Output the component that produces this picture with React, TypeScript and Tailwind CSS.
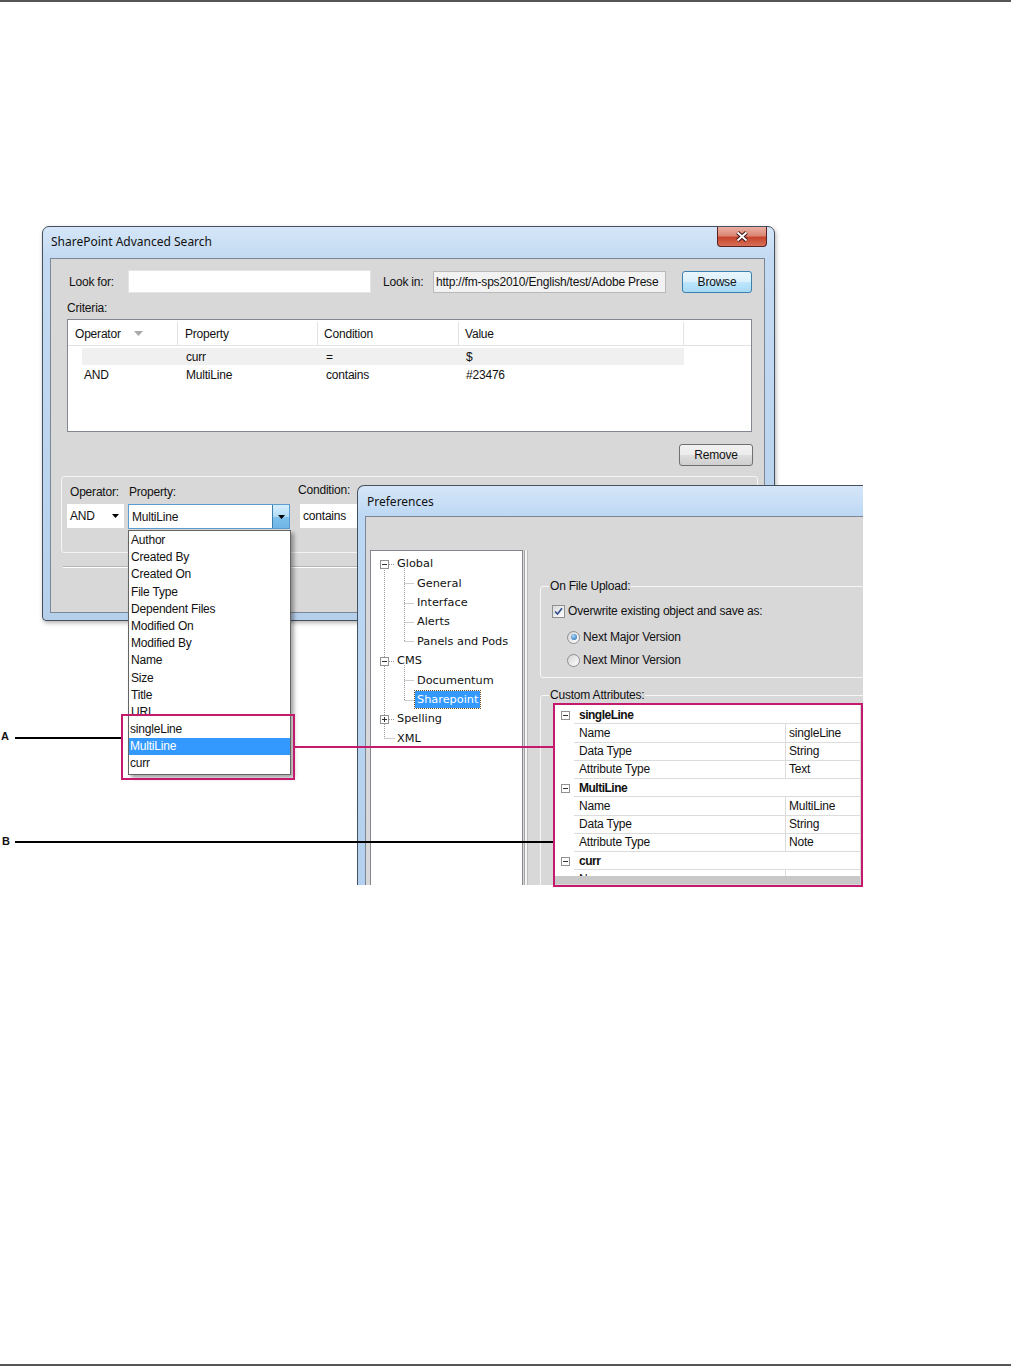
import React from "react";

const treeItems = [
  { label: "Global", level: 0 },
  { label: "General", level: 1 },
  { label: "Interface", level: 1 },
  { label: "Alerts", level: 1 },
  { label: "Panels and Pods", level: 1 },
  { label: "CMS", level: 0 },
  { label: "Documentum", level: 1 },
  { label: "Sharepoint", level: 1, selected: true },
  { label: "Spelling", level: 0 },
  { label: "XML", level: 0 },
];

const propertyItems = [
  "Author",
  "Created By",
  "Created On",
  "File Type",
  "Dependent Files",
  "Modified On",
  "Modified By",
  "Name",
  "Size",
  "Title",
  "URL",
];

type GridRow = { cat?: string; name?: string; value?: string };

const gridRows: GridRow[] = [
  { cat: "singleLine" },
  { name: "Name", value: "singleLine" },
  { name: "Data Type", value: "String" },
  { name: "Attribute Type", value: "Text" },
  { cat: "MultiLine" },
  { name: "Name", value: "MultiLine" },
  { name: "Data Type", value: "String" },
  { name: "Attribute Type", value: "Note" },
  { cat: "curr" },
  { name: "Name", value: "" },
];

const Caret = ({ color = "#000" }: { color?: string }) => (
  <svg width="7" height="4" viewBox="0 0 7 4">
    <path d="M0 0h7L3.5 4z" fill={color} />
  </svg>
);

const CloseButton = () => (
  <div className="absolute right-[-2px] top-0 flex h-[20px] w-[50px] items-center justify-center rounded-b-[4px] border border-t-0 border-[#5c2121] bg-[linear-gradient(180deg,#eab0a3_0%,#dc8775_45%,#c6452c_55%,#d66f58_100%)]">
    <svg width="14" height="11" viewBox="0 0 14 11">
      <path d="M2.5 1.5L11.5 9.5M11.5 1.5L2.5 9.5" stroke="#3a1010" strokeWidth="4" />
      <path d="M2.5 1.5L11.5 9.5M11.5 1.5L2.5 9.5" stroke="#ffffff" strokeWidth="2" />
    </svg>
  </div>
);

const Checkbox = () => (
  <span className="flex h-[13px] w-[13px] shrink-0 items-center justify-center border border-[#8e8f8f] bg-[linear-gradient(135deg,#d9d9d9,#ffffff)]">
    <svg width="9" height="9" viewBox="0 0 9 9">
      <path d="M1 4.5L3.5 7L8 1.2" stroke="#34508f" strokeWidth="1.7" fill="none" />
    </svg>
  </span>
);

const Radio = ({ checked }: { checked?: boolean }) => (
  <span className="flex h-[13px] w-[13px] shrink-0 items-center justify-center rounded-full border border-[#8e8f8f] bg-[linear-gradient(135deg,#d4d4d4,#ffffff)]">
    {checked && (
      <span className="h-[6px] w-[6px] rounded-full bg-[radial-gradient(circle_at_40%_35%,#a8dcff,#1d5ea6)]" />
    )}
  </span>
);

const ExpandBox = ({ plus }: { plus?: boolean }) => (
  <svg width="9" height="9" viewBox="0 0 9 9">
    <rect x="0.5" y="0.5" width="8" height="8" fill="#fff" stroke="#919191" />
    <path d="M2 4.5h5" stroke="#333" />
    {plus && <path d="M4.5 2v5" stroke="#333" />}
  </svg>
);

function SearchDialog() {
  return (
    <div className="absolute left-[42px] top-[226px] flex h-[395px] w-[733px] flex-col rounded-t-[7px] rounded-b-[4px] border border-[#45505e] bg-[linear-gradient(180deg,#d5e6f8_0px,#c3daf2_30px,#b6d0ec_100%)] pb-[7px] pl-[7px] pr-[9px] shadow-[1px_2px_4px_rgba(0,0,0,0.3)]">
      <div className="relative flex h-[31px] shrink-0 items-start pt-[7px]">
        <span className="pl-[1px] font-['Noto_Sans',sans-serif] text-[12px] leading-[16px] tracking-normal">
          SharePoint Advanced Search
        </span>
        <CloseButton />
      </div>

      <div className="flex flex-1 flex-col border border-[#7b8795] bg-[#d8d8d8]">
        <div className="mt-[11px] flex items-center pl-[18px]">
          <span className="w-[59px]">Look for:</span>
          <div className="h-[23px] w-[243px] border border-[#e4e4e4] bg-white" />
          <span className="ml-[12px] w-[50px]">Look in:</span>
          <div className="h-[22px] w-[233px] overflow-hidden whitespace-nowrap border border-[#b9b9b9] bg-[#f2f2f2] pl-[2px] leading-[20px]">
            http://fm-sps2010/English/test/Adobe Prese
          </div>
          <div className="ml-[16px] flex h-[22px] w-[70px] items-center justify-center rounded-[3px] border border-[#3c7fb1] bg-[linear-gradient(180deg,#eaf6fd_0%,#d9f0fc_50%,#bee6fd_51%,#a7d9f5_100%)]">
            Browse
          </div>
        </div>

        <div className="mt-[8px] h-[14px] pl-[16px] leading-[14px]">Criteria:</div>

        <div className="ml-[16px] mt-[4px] h-[113px] w-[685px] border border-[#828790] bg-white">
          <div className="flex h-[26px] border-b border-[#e3e3e3] pt-[2px]">
            <div className="flex w-[110px] items-center border-r border-[#e3e3e3] pl-[7px]">
              Operator
              <span className="ml-[13px]">
                <svg width="9" height="5" viewBox="0 0 9 5">
                  <path d="M0 0h9L4.5 5z" fill="#a9a9a9" />
                </svg>
              </span>
            </div>
            <div className="flex w-[140px] items-center border-r border-[#e3e3e3] pl-[7px]">Property</div>
            <div className="flex w-[141px] items-center border-r border-[#e3e3e3] pl-[6px]">Condition</div>
            <div className="flex w-[225px] items-center border-r border-[#e3e3e3] pl-[6px]">Value</div>
          </div>
          <div className="ml-[14px] mt-[2px] flex h-[17px] w-[602px] items-center bg-[#f0f0f0]">
            <div className="w-[96px]" />
            <div className="w-[140px] pl-[8px]">curr</div>
            <div className="w-[141px] pl-[8px]">=</div>
            <div className="pl-[7px]">$</div>
          </div>
          <div className="ml-[14px] flex h-[19px] w-[602px] items-center pt-[1px]">
            <div className="w-[96px] pl-[2px]">AND</div>
            <div className="w-[140px] pl-[8px]">MultiLine</div>
            <div className="w-[141px] pl-[8px]">contains</div>
            <div className="pl-[7px]">#23476</div>
          </div>
        </div>

        <div className="ml-[628px] mt-[12px] flex h-[22px] w-[74px] items-center justify-center rounded-[3px] border border-[#707070] bg-[linear-gradient(180deg,#f2f2f2_0%,#ebebeb_50%,#dddddd_51%,#cfcfcf_100%)]">
          Remove
        </div>

        <div className="ml-[10px] mt-[10px] h-[77px] w-[697px] rounded-[3px] border border-[#f4f4f4]">
          <div className="mt-[8px] flex h-[14px] items-center leading-[14px]">
            <span className="ml-[8px] w-[59px]">Operator:</span>
            <span className="w-[169px]">Property:</span>
            <span className="relative -top-[2px]">Condition:</span>
          </div>
          <div className="mt-[5px] flex items-start">
            <div className="ml-[5px] flex h-[24px] w-[57px] items-center justify-between bg-white pl-[3px] pr-[5px]">
              AND
              <Caret />
            </div>
            <div className="ml-[4px] flex h-[25px] w-[162px] items-center border border-[#5a9bd0] bg-white pl-[3px]">
              MultiLine
              <div className="ml-auto flex h-full w-[17px] items-center justify-center border-l border-[#3c7fb1] bg-[linear-gradient(180deg,#d6eefc_0%,#b0dcf7_50%,#80c1ec_51%,#6fb5e6_100%)]">
                <Caret />
              </div>
            </div>
            <div className="ml-[10px] flex h-[24px] w-[80px] items-center bg-white pl-[3px]">contains</div>
          </div>
        </div>

        <div className="ml-[12px] mr-[10px] mt-[13px] border-b border-t border-b-white border-t-[#b4b4b4]" />
      </div>
    </div>
  );
}

function PropertyDropdown() {
  return (
    <div className="absolute left-[128px] top-[530px] h-[245px] w-[163px] border border-[#646464] bg-white text-[#111] shadow-[3px_3px_4px_rgba(0,0,0,0.35)]">
      <div className="h-[183px] overflow-hidden pt-[1px]">
        {propertyItems.map((item) => (
          <div key={item} className="h-[17.2px] pl-[2px] leading-[17.2px]">
            {item}
          </div>
        ))}
      </div>
      <div className="pt-[7px]">
        <div className="h-[17px] pl-[1px] leading-[17px]">singleLine</div>
        <div className="h-[17px] bg-[#3399ff] pl-[1px] leading-[17px] text-white">MultiLine</div>
        <div className="h-[17px] pl-[1px] leading-[17px]">curr</div>
      </div>
    </div>
  );
}

function TreeLines() {
  const c = [13, 32, 52, 71, 90, 110, 129, 149, 168, 187];
  const dot = { stroke: "#9a9a9a", strokeDasharray: "1 1", strokeWidth: 1 };
  return (
    <svg className="pointer-events-none absolute left-0 top-0" width="60" height="200" viewBox="0 0 60 200">
      <path d={`M13.5 ${c[0]}V${c[9] + 0.5}`} {...dot} />
      {[0, 5, 8].map((i) => (
        <path key={i} d={`M18 ${c[i] + 0.5}H24`} {...dot} />
      ))}
      <path d={`M13.5 ${c[9] + 0.5}H24`} {...dot} />
      <path d={`M33.5 ${c[0] + 4}V${c[4] + 0.5}`} {...dot} />
      <path d={`M33.5 ${c[5] + 4}V${c[7] + 0.5}`} {...dot} />
      {[1, 2, 3, 4, 6, 7].map((i) => (
        <path key={i} d={`M33.5 ${c[i] + 0.5}H43`} {...dot} />
      ))}
      {[0, 5, 8].map((i) => (
        <g key={`b${i}`} transform={`translate(9 ${c[i] - 4})`}>
          <rect x="0.5" y="0.5" width="8" height="8" fill="#fff" stroke="#919191" />
          <path d="M2 4.5h5" stroke="#333" />
          {i === 8 && <path d="M4.5 2v5" stroke="#333" />}
        </g>
      ))}
    </svg>
  );
}

function PreferencesWindow() {
  return (
    <div className="absolute left-[357px] top-[485px] flex h-[400px] w-[506px] flex-col overflow-hidden rounded-tl-[7px] border-l border-t border-[#45505e] bg-[linear-gradient(180deg,#d5e6f8_0px,#bdd8f4_30px,#b3d0ee_100%)] pl-[7px]">
      <div className="flex h-[30px] shrink-0 items-start pl-[2px] pt-[8px]">
        <span className="font-['Noto_Sans',sans-serif] text-[12px] leading-[16px] tracking-normal">Preferences</span>
      </div>
      <div className="flex min-h-0 flex-1 border-l border-t border-[#7b8795] bg-[#d8d8d8]">
        {/* tree */}
        <div className="relative -mb-[2px] ml-[4px] mt-[33px] w-[153px] shrink-0 border border-[#828790] bg-white pt-[3px] font-['DejaVu_Sans',Verdana,sans-serif] text-[11.3px] tracking-normal text-[#111]">
          <TreeLines />
          {treeItems.map((t) => (
            <div key={t.label} className={`flex h-[19.4px] items-center ${t.level === 0 ? "pl-[24px]" : "pl-[44px]"}`}>
              <span
                className={
                  t.selected
                    ? "bg-[#3399ff] px-[2px] leading-[17px] text-white outline-1 outline-dotted outline-[#7a4a10]"
                    : "px-[2px] leading-[17px]"
                }
              >
                {t.label}
              </span>
            </div>
          ))}
        </div>
        <div className="ml-[1px] mt-[33px] w-[4px] shrink-0 border-l border-r border-l-[#a6a6a6] border-r-[#bdbdbd] bg-[#f4f4f4]" />

        {/* right side */}
        <div className="ml-[12px] flex w-[340px] shrink-0 flex-col">
          <fieldset className="mt-[62px] w-[340px] rounded-[3px] border border-[#f6f6f6] pb-[10px]">
            <legend className="ml-[8px] px-[1px] leading-[14px]">On File Upload:</legend>
            <div className="ml-[11px] mt-[11px] flex h-[14px] items-center">
              <Checkbox />
              <span className="ml-[3px]">Overwrite existing object and save as:</span>
            </div>
            <div className="ml-[26px] mt-[12px] flex h-[14px] items-center">
              <Radio checked />
              <span className="ml-[3px]">Next Major Version</span>
            </div>
            <div className="ml-[26px] mt-[9px] flex h-[14px] items-center">
              <Radio />
              <span className="ml-[3px]">Next Minor Version</span>
            </div>
          </fieldset>

          <fieldset className="mt-[10px] w-[340px] rounded-[3px] border border-[#f6f6f6] pb-[20px]">
            <legend className="ml-[8px] px-[1px] leading-[14px]">Custom Attributes:</legend>
            <div className="ml-[13px] mt-[2px] flex h-[180px] w-[306px] flex-col bg-white">
              <div className="min-h-0 flex-1 overflow-hidden pt-[2px]">
                {gridRows.map((r, i) =>
                  r.cat ? (
                    <div key={i} className="flex h-[18.25px]">
                      <div className="flex w-[20px] items-center pl-[7px]">
                        <ExpandBox />
                      </div>
                      <div className="flex flex-1 items-center border-b border-[#dcdcdc] pl-[5px] font-bold tracking-[-0.5px]">
                        {r.cat}
                      </div>
                    </div>
                  ) : (
                    <div key={i} className="flex h-[18.25px]">
                      <div className="w-[20px]" />
                      <div className="flex w-[212px] items-center border-b border-r border-[#dcdcdc] pl-[5px]">{r.name}</div>
                      <div className="flex flex-1 items-center border-b border-[#dcdcdc] pl-[3px]">{r.value}</div>
                    </div>
                  )
                )}
              </div>
              <div className="h-[8px] shrink-0 bg-[#c8c8c8]" />
            </div>
          </fieldset>
        </div>
      </div>
    </div>
  );
}

function Callouts() {
  return (
    <>
      <span className="absolute left-[1px] top-[731px] text-[11px] font-bold leading-[11px]">A</span>
      <div className="absolute left-[15px] top-[737px] h-[2px] w-[106px] bg-black" />
      <span className="absolute left-[2px] top-[836px] text-[11px] font-bold leading-[11px]">B</span>
      <div className="absolute left-[15px] top-[841px] h-[2px] w-[538px] bg-black" />
      <div className="absolute left-[121px] top-[714px] h-[66px] w-[174px] border-2 border-[#c41a6e]" />
      <div className="absolute left-[295px] top-[746px] h-[2px] w-[258px] bg-[#c41a6e]" />
      <div className="absolute left-[553px] top-[703px] h-[184px] w-[310px] border-2 border-[#c41a6e]" />
    </>
  );
}

export default function App() {
  return (
    <div className="relative flex h-[1367px] w-[1011px] flex-col justify-between overflow-hidden bg-white font-['Liberation_Sans',Arial,sans-serif] text-[12px] tracking-[-0.2px] text-[#111]">
      <div className="h-[2px] bg-[#555555]" />
      <div className="mb-[1px] h-[2px] bg-[#555555]" />
      <SearchDialog />
      <PropertyDropdown />
      <PreferencesWindow />
      <Callouts />
    </div>
  );
}
